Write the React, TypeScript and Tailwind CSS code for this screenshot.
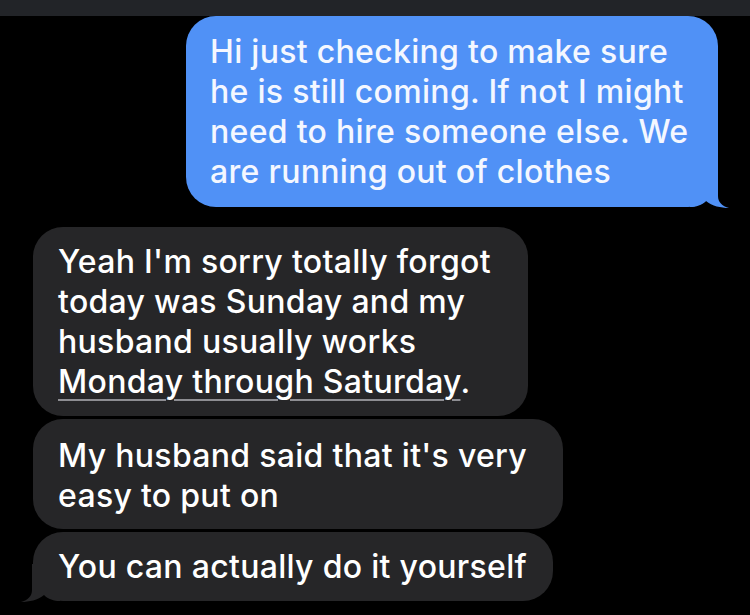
import React from "react";

function Bubble({
  children,
  color,
  width,
  tail,
  extra = "",
}: {
  children: React.ReactNode;
  color: "blue" | "gray";
  width: string;
  tail?: "right" | "left";
  extra?: string;
}) {
  const bg = color === "blue" ? "bg-[#5091f6] text-[#f4f7ff]" : "bg-[#262628] text-white";
  const fill = color === "blue" ? "#5091f6" : "#262628";
  return (
    <div className={`relative rounded-[30px] ${bg} ${width} ${extra}`}>
      {children}
      {tail === "right" && (
        <svg
          className="absolute right-[-12px] bottom-[-3px]"
          width="42"
          height="42"
          viewBox="0 0 42 42"
        >
          <path
            d="M30 2 L30 28 C30 34 34 38 41 40 C33 40 24 38 18 33 C14 37 8 39 2 39 L2 2 Z"
            fill={fill}
          />
        </svg>
      )}
      {tail === "left" && (
        <svg
          className="absolute left-[-13px] bottom-[-3px]"
          width="42"
          height="42"
          viewBox="0 0 42 42"
        >
          <path
            d="M12 2 L12 28 C12 34 8 38 1 40 C9 40 18 38 24 33 C28 37 34 39 40 39 L40 2 Z"
            fill={fill}
          />
        </svg>
      )}
    </div>
  );
}

export default function App() {
  return (
    <div
      className="w-[750px] h-[615px] bg-black overflow-hidden flex flex-col"
      style={{ fontFamily: "Inter, 'Noto Sans', sans-serif" }}
    >
      <div className="h-[16px] bg-[#222428] shrink-0" />
      <div className="flex flex-col text-[32px] font-medium leading-[40px] tracking-[0.3px] whitespace-nowrap">
        <div className="flex justify-end pr-[32px]">
          <Bubble color="blue" width="w-[532px]" tail="right" extra="pl-[24px] pr-[8px] pt-[16px] pb-[15px]">
            <p>
              Hi just checking to make sure
              <br />
              he is still coming. If not I might
              <br />
              need to hire someone else. We
              <br />
              are running out of clothes
            </p>
          </Bubble>
        </div>
        <div className="flex flex-col items-start pl-[33px] mt-[20px] gap-[3px]">
          <Bubble color="gray" width="w-[495px]" extra="pl-[25px] pr-[8px] pt-[15px] pb-[14px]">
            <p>
              Yeah I'm sorry totally forgot
              <br />
              today was Sunday and my
              <br />
              husband usually works
              <br />
              <span className="underline decoration-[#8e8e93] decoration-[2px] underline-offset-[6px]">
                Monday through Saturday
              </span>
              .
            </p>
          </Bubble>
          <Bubble color="gray" width="w-[530px]" extra="pl-[25px] pr-[8px] pt-[17px] pb-[13px]">
            <p>
              My husband said that it's very
              <br />
              easy to put on
            </p>
          </Bubble>
          <Bubble color="gray" width="w-[520px]" tail="left" extra="pl-[25px] pr-[8px] pt-[15px] pb-[14px]">
            <p>You can actually do it yourself</p>
          </Bubble>
        </div>
      </div>
    </div>
  );
}
